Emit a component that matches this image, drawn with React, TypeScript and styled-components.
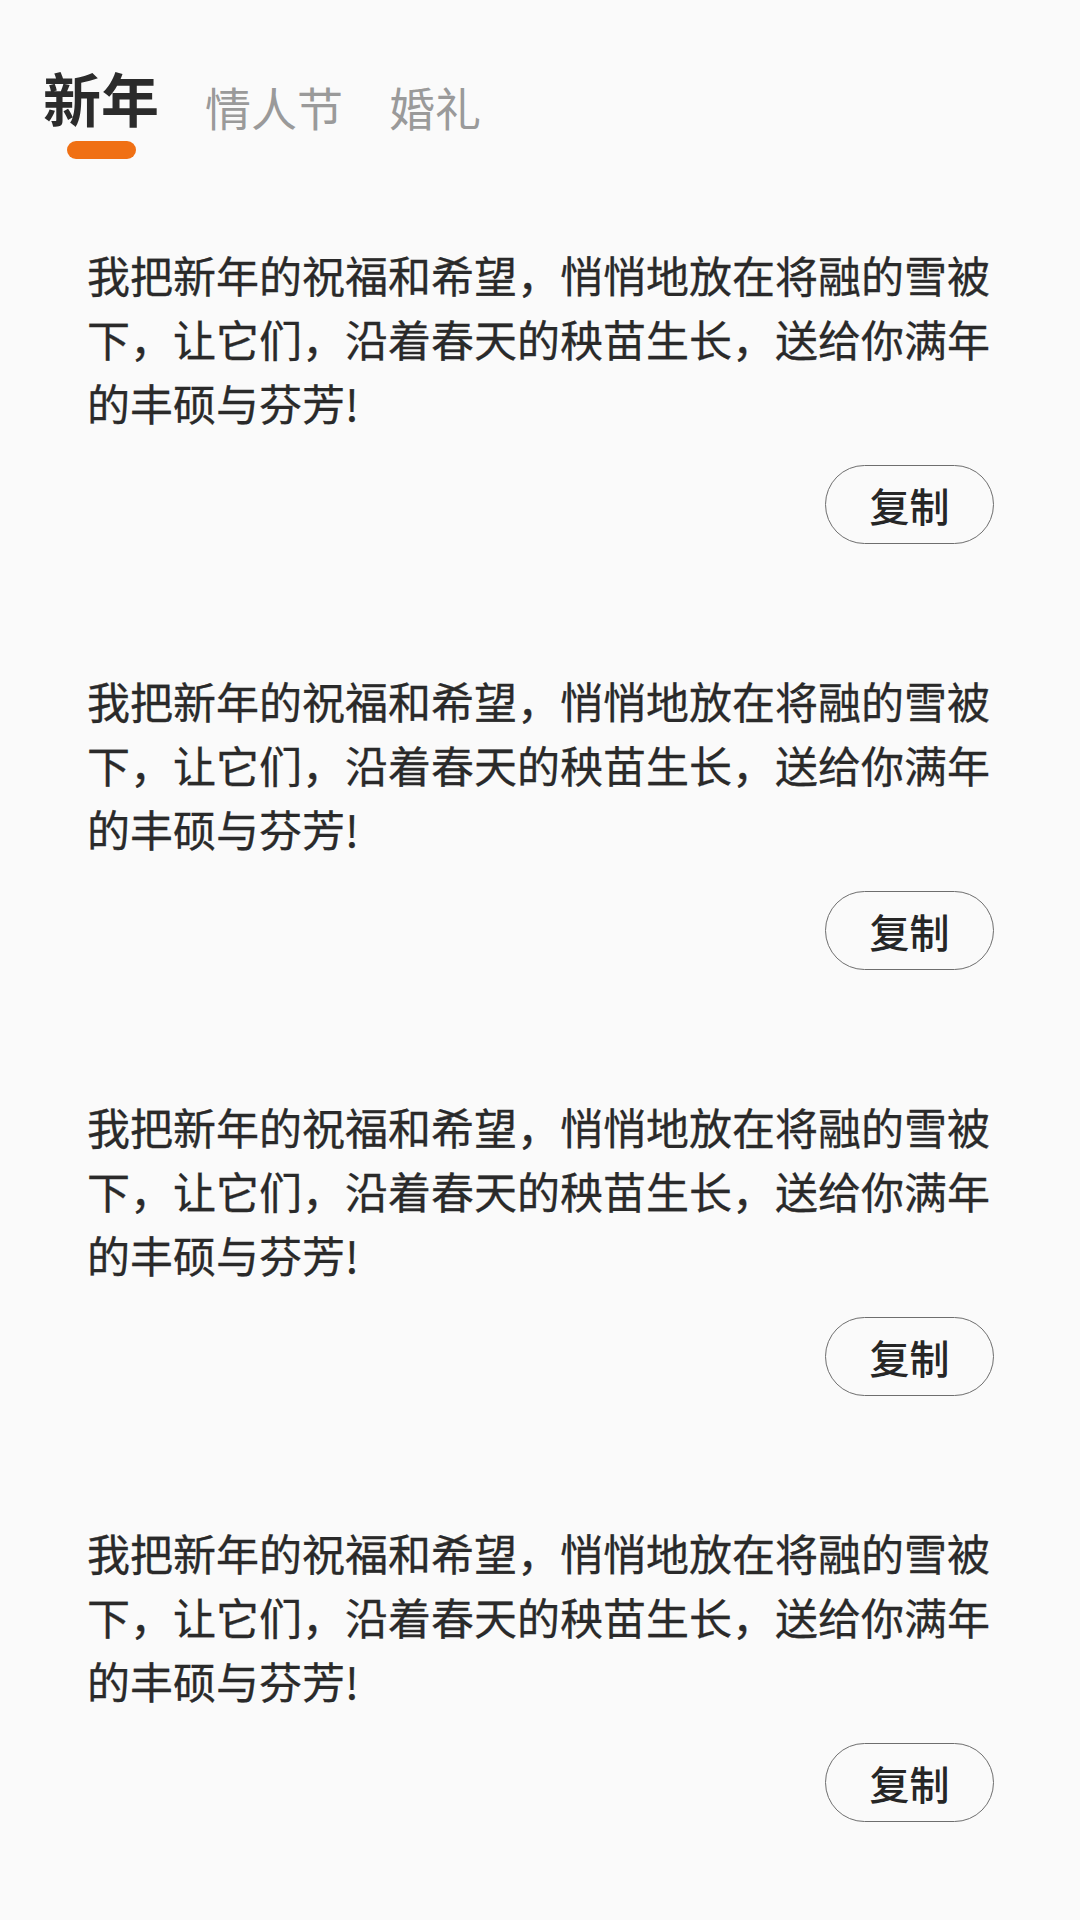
import React, { useState } from 'react';
import styled, { createGlobalStyle } from 'styled-components';

const GlobalStyle = createGlobalStyle`
  html, body {
    margin: 0;
    padding: 0;
    background: #fafafa;
  }
  body {
    font-family: 'Noto Sans CJK SC', 'Noto Sans', sans-serif;
    color: #2a2a2a;
  }
`;

const Page = styled.div`
  min-height: 100vh;
  background: #fafafa;
`;

const TabBar = styled.div`
  display: flex;
  align-items: flex-start;
  gap: 46px;
  padding: 68px 0 0 43px;
`;

const Tab = styled.div<{ $active?: boolean }>`
  display: flex;
  flex-direction: column;
  align-items: center;
  margin-top: ${(p) => (p.$active ? '0' : '15px')};
  cursor: pointer;
`;

const TabLabel = styled.span<{ $active?: boolean }>`
  font-size: ${(p) => (p.$active ? '58px' : '46px')};
  line-height: ${(p) => (p.$active ? '58px' : '46px')};
  font-weight: ${(p) => (p.$active ? 700 : 400)};
  color: ${(p) => (p.$active ? '#2b2b2b' : '#9a9a9a')};
  white-space: nowrap;
`;

const Indicator = styled.div`
  width: 69px;
  height: 18px;
  margin-top: 15px;
  border-radius: 9px;
  background: #f07014;
`;

const List = styled.div`
  display: flex;
  flex-direction: column;
  gap: 124px;
  padding: 83px 86px 0 87px;
`;

const Card = styled.div`
  display: flex;
  flex-direction: column;
  align-items: flex-end;
`;

const Blessing = styled.p`
  align-self: stretch;
  margin: 0;
  font-size: 43px;
  line-height: 64px;
  color: #2a2a2a;
  -webkit-text-stroke: 0.3px #2a2a2a;
`;

const CopyButton = styled.button`
  margin-top: 31px;
  width: 169px;
  height: 79px;
  border: 1.5px solid #6e6e6e;
  border-radius: 40px;
  background: transparent;
  font-family: inherit;
  font-size: 40px;
  font-weight: 500;
  color: #262626;
  padding: 0;
  cursor: pointer;
`;

const tabs = ['新年', '情人节', '婚礼'];

const text =
  '我把新年的祝福和希望，悄悄地放在将融的雪被下，让它们，沿着春天的秧苗生长，送给你满年的丰硕与芬芳!';

const blessings = [text, text, text, text];

export default function App() {
  const [current, setCurrent] = useState(0);

  return (
    <Page>
      <GlobalStyle />
      <TabBar>
        {tabs.map((t, i) => (
          <Tab key={t} $active={i === current} onClick={() => setCurrent(i)}>
            <TabLabel $active={i === current}>{t}</TabLabel>
            {i === current && <Indicator />}
          </Tab>
        ))}
      </TabBar>
      <List>
        {blessings.map((b, i) => (
          <Card key={i}>
            <Blessing>{b}</Blessing>
            <CopyButton onClick={() => navigator.clipboard?.writeText(b)}>
              复制
            </CopyButton>
          </Card>
        ))}
      </List>
    </Page>
  );
}
